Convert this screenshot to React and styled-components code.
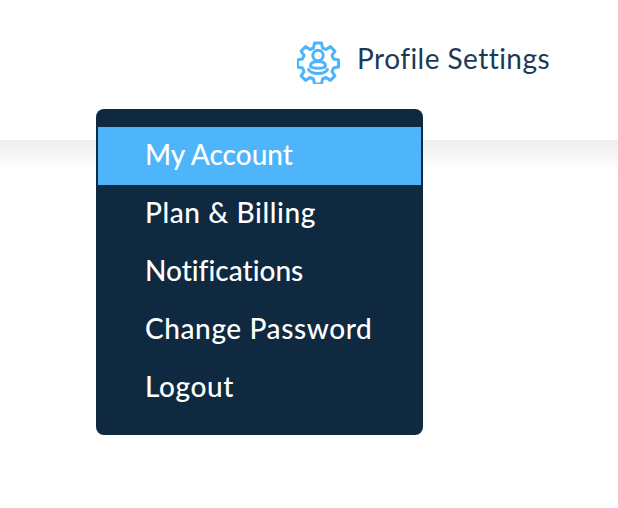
import React from 'react';
import styled, { createGlobalStyle } from 'styled-components';

const GlobalStyle = createGlobalStyle`
  html, body {
    margin: 0;
    padding: 0;
    background: #fff;
    font-family: "Lato", "Open Sans", sans-serif;
    font-variant-ligatures: none;
  }
`;

const Page = styled.div`
  position: relative;
  width: 618px;
  height: 508px;
  overflow: hidden;
  background: #fff;
`;

const Header = styled.header`
  height: 140px;
  display: flex;
  justify-content: flex-end;
  align-items: flex-start;
  padding: 39px 68px 0 0;
  box-sizing: border-box;
  background: #fff;
`;

const Shade = styled.div`
  height: 32px;
  background: linear-gradient(to bottom, #eeeeee, #fdfdfd 85%, #fff);
`;

const ProfileButton = styled.div`
  display: flex;
  align-items: center;
  gap: 16px;
  color: #1a3a56;
`;

const ProfileLabel = styled.span`
  font-size: 28px;
  line-height: 38px;
  letter-spacing: 0.45px;
  margin-bottom: 8px;
`;

const Menu = styled.ul`
  position: absolute;
  left: 96px;
  top: 109px;
  width: 327px;
  height: 326px;
  margin: 0;
  padding: 18px 2px 0 2px;
  box-sizing: border-box;
  list-style: none;
  background: #0f2a40;
  border-radius: 8px;
`;

const MenuItem = styled.li`
  height: 58px;
  padding-left: 47px;
  color: #fff;
  font-size: 28px;
  font-weight: 500;
  line-height: 55px;
  letter-spacing: ${p => (p.$tight ? '0' : '0.6px')};
  background: ${p => (p.$active ? '#4fb5fb' : 'transparent')};
`;

const items = [
  { label: 'My Account', tight: true },
  { label: 'Plan & Billing' },
  { label: 'Notifications', tight: true },
  { label: 'Change Password' },
  { label: 'Logout' },
];

const GearIcon = () => (
  <svg width="44" height="44" viewBox="1 0 44 44" fill="none" stroke="#4fb5fb" strokeWidth="3" strokeLinejoin="round" strokeLinecap="round">
    <path d="M18.500 3h7l1 5 3.600 1.500 4.300-2.900 4.500 4.500-2.900 4.300 1.500 3.600 5 1v7l-5 1-1.500 3.600 2.900 4.300-4.500 4.500-4.300-2.900-3.600 1.500-1 5h-7l-1-5-3.600-1.500-4.300 2.900-4.500-4.500 2.900-4.300-1.500-3.600-5-1v-7l5-1 1.500-3.600-2.900-4.300 4.500-4.500 4.300 2.900 3.600-1.500z" />
    <circle cx="22" cy="15.500" r="5.200" />
    <path d="M14.500 26c0-3 3-4.400 7.500-4.400s7.500 1.400 7.500 4.400c0 1.300-3 2.300-7.500 2.300s-7.500-1-7.500-2.300z" />
    <path d="M12.500 29.500c1.500 2.600 5 4 9.500 4s8-1.400 9.500-4" />
  </svg>
);

export default function App() {
  return (
    <Page>
      <GlobalStyle />
      <Header>
        <ProfileButton>
          <GearIcon />
          <ProfileLabel>Profile Settings</ProfileLabel>
        </ProfileButton>
      </Header>
      <Shade />
      <Menu>
        {items.map((item, i) => (
          <MenuItem key={item.label} $active={i === 0} $tight={item.tight}>{item.label}</MenuItem>
        ))}
      </Menu>
    </Page>
  );
}
